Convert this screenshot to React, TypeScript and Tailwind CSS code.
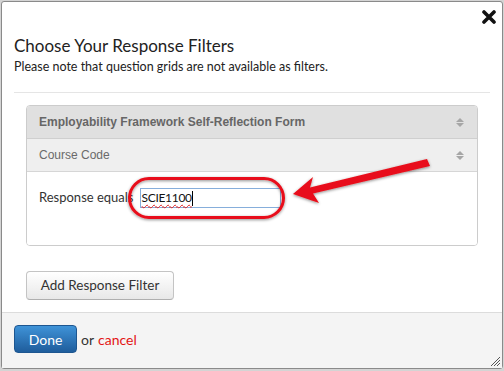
import React from "react";

function SortIcon() {
  return (
    <svg width="8" height="9" viewBox="0 0 8 9" className="block">
      <polygon points="4,0 8,4 0,4" fill="#a6a6a6" />
      <polygon points="0,5 8,5 4,9" fill="#a6a6a6" />
    </svg>
  );
}

export default function App() {
  const lato = { fontFamily: "Lato, 'Open Sans', sans-serif" } as React.CSSProperties;
  const arial = { fontFamily: "'Liberation Sans', Arial, sans-serif" } as React.CSSProperties;
  return (
    <div className="relative w-[504px] h-[371px] bg-[#d4d4d4] overflow-hidden">
      <div
        className="relative ml-px mt-px w-[502px] h-[368px] bg-white border border-[#8a8a8a] rounded-[3px] flex flex-col"
        style={lato}
      >
        {/* close X */}
        <svg className="absolute left-[480px] top-[8px]" width="14" height="14" viewBox="0 0 14 14">
          <path d="M2 2 L12 12 M12 2 L2 12" stroke="#111" strokeWidth="3.6" strokeLinecap="round" />
        </svg>

        {/* header */}
        <div className="mx-3 pt-[32px] pb-[17px] border-b border-[#e5e5e5]">
          <div className="text-[17px] leading-[24px] text-[#222]">Choose Your Response Filters</div>
          <div className="mt-px text-[12.5px] leading-[16px] text-[#222]">
            Please note that question grids are not available as filters.
          </div>
        </div>

        {/* body */}
        <div className="px-6 pt-3">
          <div className="border border-[#cccccc] rounded-[4px] overflow-hidden">
            <div
              className="h-[33px] bg-[#e0e0e0] border-b border-[#cfcfcf] flex items-center justify-between pl-3 pr-[13px]"
              style={arial}
            >
              <span className="text-[12px] font-bold text-[#666]">Employability Framework Self-Reflection Form</span>
              <SortIcon />
            </div>
            <div
              className="h-[33px] bg-[#efefef] border-b border-[#d6d6d6] flex items-center justify-between pl-3 pr-[13px]"
              style={arial}
            >
              <span className="text-[12px] text-[#6a6a6a]">Course Code</span>
              <SortIcon />
            </div>
            <div className="h-[73px] bg-white pl-3 pt-4">
              <div className="flex items-center h-[20px]">
                <span className="text-[13px] text-[#333]">Response equals</span>
                <div className="ml-[6px] w-[141px] h-[20px] border border-[#86aedb] flex items-center pl-px">
                  <span className="text-[12px] leading-[14px] tracking-[-0.3px] text-[#111] underline decoration-wavy decoration-[#e02020] decoration-1 underline-offset-2">
                    SCIE1100
                  </span>
                  <span className="inline-block w-px h-[15px] bg-black" />
                </div>
              </div>
            </div>
          </div>

          <div className="pt-[25px] pb-3">
            <button className="w-[148px] h-[29px] rounded-[4px] border border-[#c4c4c4] border-b-[#afafaf] bg-gradient-to-b from-white to-[#e8e8e8] text-[13.5px] text-[#333]">
              Add Response Filter
            </button>
          </div>
        </div>

        {/* footer */}
        <div className="flex-1 bg-[#f4f4f4] border-t border-[#dcdcdc] px-3 pt-3 flex items-start">
          <button className="w-[63px] h-[28px] rounded-[4px] border border-[#1d5690] bg-gradient-to-b from-[#3f93d8] to-[#1f5d9c] text-white text-[14px]">
            Done
          </button>
          <span className="ml-1 mt-[4px] text-[14px] text-[#333]">or</span>
          <span className="ml-1 mt-[4px] text-[14px] text-[#e31414]">cancel</span>
        </div>

        {/* resize grip */}
        <svg className="absolute right-[1px] bottom-[1px]" width="12" height="12" viewBox="0 0 12 12">
          <path d="M11 2 L2 11 M11 5 L5 11 M11 8 L8 11" stroke="#555" strokeWidth="1" />
        </svg>
      </div>

      {/* annotation overlay */}
      <svg className="absolute left-0 top-0 pointer-events-none" width="504" height="371" viewBox="0 0 504 371">
        <defs>
          <filter id="sh" x="-20%" y="-50%" width="140%" height="200%">
            <feDropShadow dx="0" dy="1" stdDeviation="1.4" floodColor="#000" floodOpacity="0.45" />
          </filter>
        </defs>
        <g filter="url(#sh)">
          <rect x="129.5" y="178.5" width="154" height="39" rx="19.5" fill="none" stroke="#e8101a" strokeWidth="3" />
          <path d="M427 159 L430 166 L313 193.5 L319 203 L293 194 L313 177 L310 187.5 Z" fill="#e8101a" />
        </g>
      </svg>
    </div>
  );
}
